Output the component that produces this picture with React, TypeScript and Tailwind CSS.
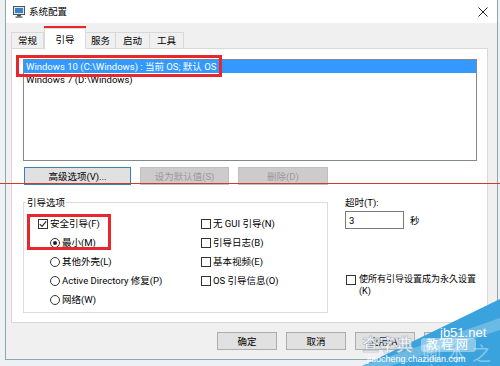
import React from "react";

const font = "font-['Roboto','Noto_Sans_CJK_SC',sans-serif]";

const Check = ({ checked }: { checked?: boolean }) => (
  <span className="flex h-[10px] w-[10px] shrink-0 items-center justify-center border border-[#333] bg-white">
    {checked && (
      <svg width="8" height="8" viewBox="0 0 8 8">
        <path d="M0.8 4.2 L3 6.4 L7.2 1.4" fill="none" stroke="#222" strokeWidth="1.1" />
      </svg>
    )}
  </span>
);

const Radio = ({ checked }: { checked?: boolean }) => (
  <span className="flex h-[10px] w-[10px] shrink-0 items-center justify-center rounded-full border border-[#333] bg-white">
    {checked && <span className="h-[4px] w-[4px] rounded-full bg-[#222]" />}
  </span>
);

const tabs = [
  { label: "常规", w: "w-[33px]" },
  { label: "引导", w: "w-[42px]", active: true },
  { label: "服务", w: "w-[31px]" },
  { label: "启动", w: "w-[35px]" },
  { label: "工具", w: "w-[35px]" },
];

const leftOpts = [
  { label: "安全引导(F)", kind: "check", checked: true },
  { label: "最小(M)", kind: "radio", checked: true, indent: true },
  { label: "其他外壳(L)", kind: "radio", indent: true },
  { label: "Active Directory 修复(P)", kind: "radio", indent: true },
  { label: "网络(W)", kind: "radio", indent: true },
];

const rightOpts = ["无 GUI 引导(N)", "引导日志(B)", "基本视频(E)", "OS 引导信息(O)"];

export default function App() {
  return (
    <div className={`relative h-[366px] w-[500px] overflow-hidden bg-[#eef1f3] text-[9.5px] text-black ${font}`}>
      {/* window */}
      <div className="ml-[5px] flex h-[360px] w-[493px] flex-col border-x border-b border-[#8aa7b3] bg-[#f0f0f0]">
        {/* title bar */}
        <div className="flex h-[23px] items-center bg-white pl-[7px] pr-[9px]">
          <svg width="13" height="12" viewBox="0 0 13 12">
            <rect x="0.5" y="0.5" width="11" height="8" fill="#dfe8f0" stroke="#4a5560" />
            <rect x="2" y="2" width="8" height="5" fill="#3b82c4" />
            <rect x="4" y="9" width="4" height="1.5" fill="#4a5560" />
            <rect x="2.5" y="10.5" width="7" height="1.2" fill="#4a5560" />
          </svg>
          <span className="ml-[3px] leading-[13px]">系统配置</span>
          <svg className="ml-auto" width="10" height="10" viewBox="0 0 10 10">
            <path d="M0.5 0.5 L9.5 9.5 M9.5 0.5 L0.5 9.5" stroke="#222" strokeWidth="1" />
          </svg>
        </div>

        <div className="px-[5px]">
          {/* tabs */}
          <div className="mt-[5px] flex h-[20px] items-end">
            {tabs.map((t) =>
              t.active ? (
                <div
                  key={t.label}
                  className={`${t.w} relative z-[1] -mb-px flex h-[21px] items-center justify-center border-x border-t border-[#d9d9d9] bg-white leading-[13px]`}
                >
                  {t.label}
                </div>
              ) : (
                <div
                  key={t.label}
                  className={`${t.w} -ml-px flex h-[16px] items-center justify-center border-x border-t border-[#d9d9d9] bg-[#f0f0f0] leading-[13px] first:ml-0`}
                >
                  {t.label}
                </div>
              )
            )}
          </div>

          {/* panel */}
          <div className="h-[275px] w-[477px] border border-[#d9d9d9] bg-white pl-[11px] pt-[10px]">
            <div className="h-[102px] w-[454px] border border-[#828790] bg-white">
              <div className="h-[13px] bg-[#3399ff] pl-[2px] leading-[13px] text-white">
                Windows 10 (C:\Windows) : 当前 OS; 默认 OS
              </div>
              <div className="h-[13px] pl-[2px] leading-[13px]">Windows 7 (D:\Windows)</div>
            </div>

            <div className="ml-px mt-[6px] flex gap-[9px]">
              <div className="flex h-[18px] w-[107px] items-center justify-center border border-[#3c7fb1] bg-[#e1e1e1] leading-[13px]">
                高级选项(V)...
              </div>
              <div className="flex h-[18px] w-[89px] items-center justify-center border border-[#bfbfbf] bg-[#cccccc] leading-[13px] text-[#9a9a9a]">
                设为默认值(S)
              </div>
              <div className="flex h-[18px] w-[90px] items-center justify-center border border-[#bfbfbf] bg-[#cccccc] leading-[13px] text-[#9a9a9a]">
                删除(D)
              </div>
            </div>

            <div className="mt-[11px] flex">
              <fieldset className="h-[117px] w-[305px] border border-[#dcdcdc]">
                <legend className="ml-[2px] px-px leading-[13px]">引导选项</legend>
                <div className="flex pt-[5px]">
                  <div className="w-[177px]">
                    {leftOpts.map((o) => (
                      <div
                        key={o.label}
                        className={`flex h-[19px] items-center gap-[2px] leading-[13px] ${o.indent ? "pl-[26px]" : "pl-[14px]"}`}
                      >
                        {o.kind === "check" ? <Check checked={o.checked} /> : <Radio checked={o.checked} />}
                        <span>{o.label}</span>
                      </div>
                    ))}
                  </div>
                  <div>
                    {rightOpts.map((l) => (
                      <div key={l} className="flex h-[19px] items-center gap-[2px] leading-[13px]">
                        <Check />
                        <span>{l}</span>
                      </div>
                    ))}
                  </div>
                </div>
              </fieldset>

              <div className="ml-[17px]">
                <div className="leading-[13px]">超时(T):</div>
                <div className="mt-[2px] flex items-center">
                  <div className="flex h-[18px] w-[59px] items-center border border-[#7a7a7a] pl-[3px] leading-[13px]">3</div>
                  <span className="ml-[6px] leading-[13px]">秒</span>
                </div>
                <div className="ml-px mt-[44px] flex gap-[3px]">
                  <span className="mt-[2px]">
                    <Check />
                  </span>
                  <span className="text-[9px] leading-[12px]">
                    使所有引导设置成为永久设置
                    <br />
                    (K)
                  </span>
                </div>
              </div>
            </div>
          </div>

          {/* dialog buttons */}
          <div className="ml-[206px] mt-[9px] flex gap-[9px]">
            <div className="flex h-[18px] w-[60px] items-center justify-center border border-[#adadad] bg-[#e1e1e1] leading-[13px]">确定</div>
            <div className="flex h-[18px] w-[60px] items-center justify-center border border-[#adadad] bg-[#e1e1e1] leading-[13px]">取消</div>
            <div className="flex h-[18px] w-[60px] items-center justify-center border border-[#adadad] bg-[#e1e1e1] leading-[13px]">应用(A)</div>
            <div className="flex h-[18px] w-[60px] items-center justify-center border border-[#adadad] bg-[#e1e1e1] leading-[13px]">帮助</div>
          </div>
        </div>
      </div>

      {/* annotations */}
      <div className="absolute left-0 top-[183px] h-px w-[500px] bg-[#d0392e]" />
      <div className="absolute left-[44px] top-[26px] h-[23px] w-[42px] border-[3px] border-[#e8262b]" />
      <div className="absolute left-[16px] top-[55px] h-[22px] w-[206px] border-[3px] border-[#e8262b]" />
      <div className="absolute left-[27px] top-[214px] h-[36px] w-[84px] border-[3px] border-[#e8262b]" />

      {/* watermark */}
      <svg className="absolute left-0 top-0" width="500" height="366" viewBox="0 0 500 366">
        <polygon points="362,366 500,299 500,366" fill="#3aa3dd" />
        <polygon points="362,366 500,318 500,330 390,366" fill="#ffffff" fillOpacity="0.25" />
      </svg>
      <div className="absolute left-[440px] top-[326px] font-['Liberation_Sans',sans-serif] text-[13px] leading-[13px] text-white">jb51.net</div>
      <div className="absolute left-[422px] top-[345px] text-[19px] leading-[20px] tracking-[6px] text-white/40">脚本之家</div>
      <div className="absolute left-[421px] top-[338px] rounded-[3px] bg-white/40 px-[5px] text-[12px] leading-[14px] tracking-[3px] text-white">教程网</div>
      <div className="absolute left-[362px] top-[336px] text-[17px] font-bold leading-[18px] text-white/80 [-webkit-text-stroke:0.5px_#9ab]">查字典</div>
      <div className="absolute left-[367px] top-[354px] font-['Liberation_Sans',sans-serif] text-[9px] leading-[10px] text-white">jiaocheng.chazidian.com</div>
    </div>
  );
}
